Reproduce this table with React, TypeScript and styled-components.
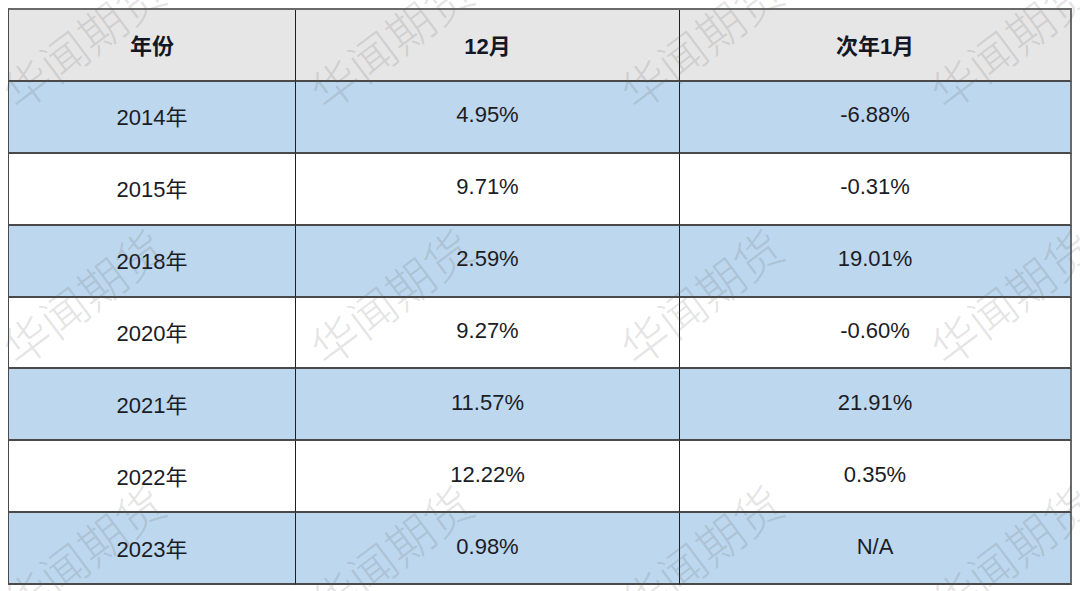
import React from "react";
import styled, { createGlobalStyle } from "styled-components";

const Global = createGlobalStyle`
  html, body { margin: 0; padding: 0; background: #ffffff; }
  body { font-family: "Liberation Sans", Arial, "Noto Sans CJK SC", sans-serif; }
`;

const Page = styled.div`
  position: relative;
  width: 1080px;
  height: 591px;
  overflow: hidden;
  background: #ffffff;
  padding: 8px 0 0 8px;
  box-sizing: border-box;
`;

const Table = styled.div`
  display: grid;
  grid-template-columns: 287px 384px 392px;
  grid-auto-rows: 71.875px;
  width: 1064px;
  border-top: 2px solid #6a6a6a;
  border-left: 1px solid #4a4a4a;
  box-sizing: border-box;
`;

const Cell = styled.div<{ $tone: "head" | "blue" | "white"; $last?: boolean }>`
  display: flex;
  align-items: center;
  justify-content: center;
  box-sizing: border-box;
  border-bottom: 2px solid #4a4a4a;
  border-right: ${(p) => (p.$last ? "2px solid #6a6a6a" : "1px solid #1f1f1f")};
  background: ${(p) =>
    p.$tone === "head" ? "#e7e6e6" : p.$tone === "blue" ? "#bdd7ee" : "#ffffff"};
  color: ${(p) => (p.$tone === "head" ? "#141824" : "#1a1c26")};
  font-family: "Liberation Sans", Arial, "Noto Sans CJK SC", sans-serif;
  font-size: 22px;
  font-weight: ${(p) => (p.$tone === "head" ? 700 : 400)};
  padding-bottom: ${(p) => (p.$tone === "head" ? "2px" : "3px")};
`;

const Overlay = styled.div`
  position: absolute;
  inset: 0;
  pointer-events: none;
`;

const Mark = styled.span`
  position: absolute;
  font-family: "Noto Sans CJK SC", sans-serif;
  font-weight: 300;
  font-size: 47px;
  line-height: 1;
  color: rgba(90, 90, 90, 0.18);
  white-space: nowrap;
  transform: translate(-50%, -50%) rotate(-37deg);
`;

const header = ["年份", "12月", "次年1月"];
const rows: [string, string, string][] = [
  ["2014年", "4.95%", "-6.88%"],
  ["2015年", "9.71%", "-0.31%"],
  ["2018年", "2.59%", "19.01%"],
  ["2020年", "9.27%", "-0.60%"],
  ["2021年", "11.57%", "21.91%"],
  ["2022年", "12.22%", "0.35%"],
  ["2023年", "0.98%", "N/A"],
];

const markX = [82, 390, 700, 1010];
const markY = [40, 296, 552];

export default function App() {
  return (
    <>
      <Global />
      <Page>
        <Table>
          {header.map((h, i) => (
            <Cell key={h} $tone="head" $last={i === 2}>
              {h}
            </Cell>
          ))}
          {rows.map((r, ri) =>
            r.map((c, ci) => (
              <Cell key={`${ri}-${ci}`} $tone={ri % 2 === 0 ? "blue" : "white"} $last={ci === 2}>
                {c}
              </Cell>
            ))
          )}
        </Table>
        <Overlay>
          {markY.map((y) =>
            markX.map((x) => (
              <Mark key={`${x}-${y}`} style={{ left: x, top: y }}>
                华闻期货
              </Mark>
            ))
          )}
        </Overlay>
      </Page>
    </>
  );
}
